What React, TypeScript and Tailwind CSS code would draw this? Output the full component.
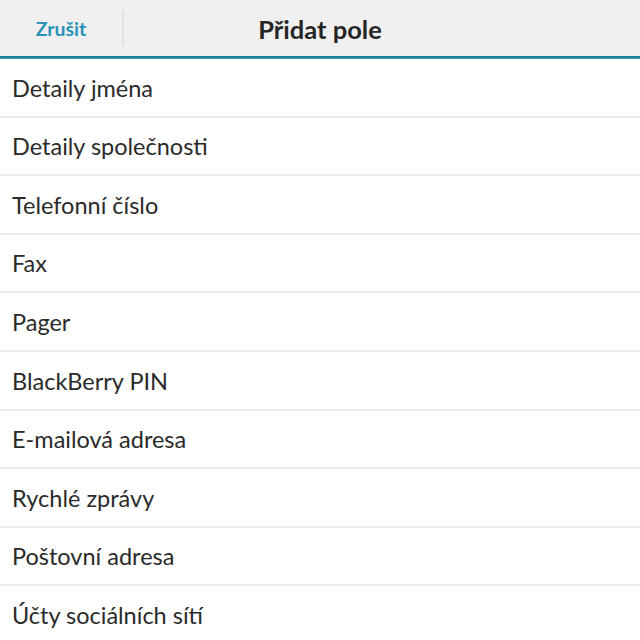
import React from "react";

const items = [
  "Detaily jména",
  "Detaily společnosti",
  "Telefonní číslo",
  "Fax",
  "Pager",
  "BlackBerry PIN",
  "E-mailová adresa",
  "Rychlé zprávy",
  "Poštovní adresa",
  "Účty sociálních sítí",
];

export default function App() {
  return (
    <div className="w-[640px] h-[640px] overflow-hidden bg-white" style={{ fontFamily: "Lato, 'Noto Sans', sans-serif" }}>
      <div className="h-[56px] bg-[#f0f0f0] flex items-center relative">
        <div className="w-[122px] flex justify-center pt-[2px]">
          <span className="text-[19.5px] font-bold text-[#2a93b9]">Zrušit</span>
        </div>
        <div className="w-[2px] h-[36px] bg-[#e2e2e2]" />
        <div className="absolute inset-0 flex items-center justify-center pointer-events-none pt-[2px]">
          <span className="text-[25.5px] font-bold text-[#262626]">Přidat pole</span>
        </div>
      </div>
      <div className="h-[3px] bg-[#1f7d9c] border-b border-[#3aa7c9]" />
      <div className="flex flex-col">
        {items.map((t) => (
          <div key={t} className="h-[58.6px] border-b-2 border-[#ececec] flex items-center pl-[12px] pt-[2px]">
            <span className="text-[23.5px] text-[#2a2a2a]">{t}</span>
          </div>
        ))}
      </div>
    </div>
  );
}
